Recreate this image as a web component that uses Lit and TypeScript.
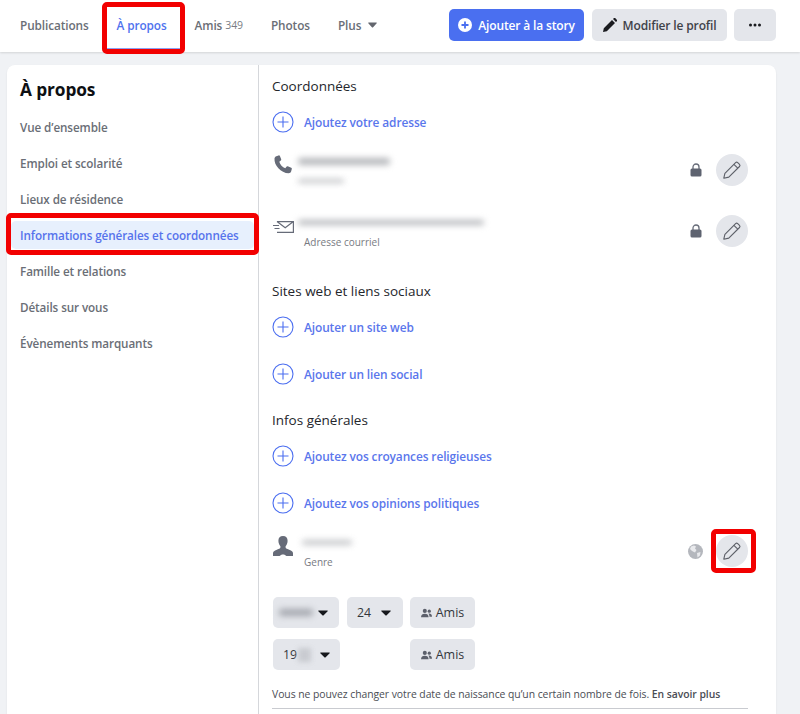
import { LitElement, html, css } from "lit";
import { customElement } from "lit/decorators.js";

const plusCircle = html`<svg class="plus" width="22" height="22" viewBox="0 0 22 22" fill="none" stroke="#4b6ef0" stroke-width="1.1"><circle cx="11" cy="11" r="10"/><path d="M11 5.5v11M5.5 11h11"/></svg>`;
const pencilIcon = html`<svg width="20" height="20" viewBox="0 0 20 20" fill="none" stroke="#5d6068" stroke-width="1.1" stroke-linejoin="round"><path d="M1.8 18.2l1.1-4.9L13.6 2.6a1.5 1.5 0 0 1 2.1 0l1.8 1.8a1.5 1.5 0 0 1 0 2.1L6.8 17.1z"/><path d="M11.9 4.3l3.9 3.9"/></svg>`;
const lockIcon = html`<svg width="12" height="14" viewBox="0 0 12 14"><path d="M3 6V4a3 3 0 0 1 6 0v2" fill="none" stroke="#666b78" stroke-width="1.3"/><rect x="0.5" y="5.5" width="11" height="8" rx="1.5" fill="#5e6370"/></svg>`;
const caret = html`<svg class="caret" width="10" height="6" viewBox="0 0 12 7" preserveAspectRatio="none"><path d="M0.8 0.5h10.4a.6.6 0 0 1 .4 1L6.5 6.3a.7.7 0 0 1-1 0L.4 1.5a.6.6 0 0 1 .4-1z" fill="#16181c"/></svg>`;
const tabCaret = html`<svg class="caret" width="9" height="6" viewBox="0 0 12 7" preserveAspectRatio="none"><path d="M0.8 0.5h10.4a.6.6 0 0 1 .4 1L6.5 6.3a.7.7 0 0 1-1 0L.4 1.5a.6.6 0 0 1 .4-1z" fill="#63666e"/></svg>`;
const friends = html`<svg width="11" height="10" viewBox="0 0 13 11" fill="#5c606b"><circle cx="4.5" cy="3" r="2.4"/><path d="M0 10.5c0-3 1.8-4.2 4.5-4.2S9 7.5 9 10.5z"/><circle cx="9.8" cy="3.4" r="1.9"/><path d="M9.6 6.2c2 0 3.4 1 3.4 3.6h-3c0-1.400-.3-2.600-1.300-3.400z"/></svg>`;

@customElement("app-root")
export class AppRoot extends LitElement {
  static styles = css`
    :host { display: block; width: 800px; height: 714px; overflow: hidden; position: relative; background: #f0f2f5;
      font-family: "Open Sans", "Noto Sans", sans-serif; color: #1c1e21; }
    .top { height: 52px; background: #fff; box-shadow: 0 1px 2px rgba(0,0,0,.12); display: flex; align-items: center; padding: 0 24px 2px 6px; box-sizing: border-box; }
    .tab { padding: 0 14px; font-size: 11.800px; font-weight: 600; color: #6a6e76; display: flex; align-items: center; gap: 3px; white-space: nowrap; height: 50px; box-sizing: border-box; letter-spacing: -.1px; }
    .tab.on { color: #4f72ee; position: relative; }
    .tab.on::after { content: ""; position: absolute; left: 0; right: 0; bottom: 0; height: 2px; background: #8d9ff2; }
    .tab small { font-size: 10.500px; font-weight: 400; color: #7a7d84; }
    .tab .caret { margin-left: 4px; }
    .spacer { flex: 1; }
    .btn { height: 32px; border-radius: 5px; display: flex; align-items: center; justify-content: center; gap: 6px; font-size: 12px; font-weight: 600; background: #e4e6eb; color: #3f4249; box-sizing: border-box; letter-spacing: -.15px; white-space: nowrap; }
    .btn.blue { width: 135px; background: #4a6ff0; color: #fff; margin-right: 8px; }
    .btn.edit { width: 135px; margin-right: 7px; }
    .btn.more { width: 42px; }
    .page { padding: 13px 24px 0 7px; }
    .card { background: #fff; border-radius: 8px; display: flex; height: 680px; box-shadow: 0 1px 2px rgba(0,0,0,.08); }
    .side { width: 251px; flex: none; border-right: 1px solid #d5d7db; }
    .side h1 { margin: 0; font-size: 17.300px; font-weight: 700; color: #0e1013; height: 44px; padding: 14px 0 0 13px; box-sizing: border-box; line-height: 22px; letter-spacing: -.1px; }
    .item { height: 36px; display: flex; align-items: center; padding-left: 13px; font-size: 11.700px; font-weight: 600; color: #6a6e76; white-space: nowrap; letter-spacing: -.1px; }
    .item.on { color: #5673ec; position: relative; }
    .item.on::before { content: ""; position: absolute; z-index: 0; left: 4px; right: 4px; top: 4px; bottom: 4px; background: #e7f0fd; border-radius: 5px; }
    .item.on span { position: relative; }
    .main { flex: 1; padding: 11px 28px 0 13px; }
    h2 { margin: 0; height: 20px; line-height: 20px; font-size: 13.500px; font-weight: 500; color: #24262b; }
    h2.s2 { margin-top: 25px; }
    h2.s3 { margin-top: 13px; }
    .add { height: 47px; display: flex; align-items: center; gap: 10px; font-size: 11.900px; font-weight: 600; color: #5a76ec; letter-spacing: -.1px; }
    .add.first { margin-top: 2px; }
    .add.s2 { margin-top: 2px; }
    .add.s3 { margin-top: 2px; }
    .row { height: 50px; display: flex; align-items: center; }
    .row.mail { margin-top: 11px; }
    .ic { width: 32px; flex: none; align-self: flex-start; padding: 10px 0 0 1px; box-sizing: border-box; }
    .mail .ic { padding-top: 15px; }
    .gender .ic { padding-top: 10px; }
    .ic svg { display: block; }
    .info { flex: 1; display: flex; flex-direction: column; align-self: flex-start; }
    .blur { background: #b4b6ba; filter: blur(3px); border-radius: 3px; }
    .b1 { width: 92px; height: 7px; margin: 13px 0 0 -6px; }
    .b2 { width: 46px; height: 4px; margin: 14px 0 0 -6px; opacity: .85; }
    .b3 { width: 186px; height: 5px; margin: 14px 0 0 -6px; }
    .b4 { width: 50px; height: 5px; margin: 14px 0 0 -2px; opacity: .8; }
    .sub { font-size: 10px; color: #777a82; line-height: 14px; }
    .mail .sub { margin-top: 10px; }
    .gender .sub { margin-top: 10px; }
    .lock { width: 21px; display: flex; justify-content: center; margin-right: 10px; }
    .pen { width: 32px; height: 32px; border-radius: 50%; background: #e4e6eb; display: flex; align-items: center; justify-content: center; }
    .formrow { display: grid; grid-template-columns: 74px 63px 65px; height: 31px; align-items: stretch; padding-left: 1px; }
    .formrow.f1 { margin-top: 21px; }
    .formrow.f2 { margin-top: 11px; }
    .sel { background: #e4e6eb; border-radius: 5px; display: flex; align-items: center; font-size: 12.300px; font-weight: 500; color: #33363c; box-sizing: border-box; padding-left: 10px; }
    .sel.month { width: 66px; padding-left: 6px; gap: 5px; }
    .sel.day { width: 56px; gap: 10px; }
    .sel.year { width: 67px; grid-column: 1 / 3; }
    .sel.year .caret { margin-left: 9px; }
    .sel.amis { width: 65px; grid-column: 3; justify-content: center; gap: 4px; padding: 0; font-size: 12.500px; font-weight: 400; }
    .bm { width: 34px; height: 7px; background: #a3a6ad; filter: blur(3px); border-radius: 3px; }
    .by { width: 13px; height: 14px; background: #c9cbd1; filter: blur(2.500px); margin-left: 1px; }
    .note { margin-top: 14px; height: 20px; line-height: 20px; font-size: 10.400px; color: #4a4d54; white-space: nowrap; letter-spacing: -.05px; }
    .note b { font-weight: 600; }
    .rule { margin-top: 4px; border-top: 1px solid #c9cbd0; width: 476px; }
    .mark { position: absolute; border: 5px solid #f20000; border-radius: 5px; box-sizing: border-box; pointer-events: none; z-index: 3; }
    .m1 { left: 102px; top: 2px; width: 83px; height: 52px; }
    .m2 { left: 6px; top: 213px; width: 253px; height: 42px; }
    .m3 { left: 711px; top: 529px; width: 45px; height: 44px; }
  `;

  render() {
    return html`
      <div class="top">
        <div class="tab">Publications</div>
        <div class="tab on">À propos</div>
        <div class="tab">Amis <small>349</small></div>
        <div class="tab">Photos</div>
        <div class="tab">Plus ${tabCaret}</div>
        <div class="spacer"></div>
        <div class="btn blue">
          <svg width="14" height="14" viewBox="0 0 14 14"><circle cx="7" cy="7" r="7" fill="#fff"/><path d="M7 3.500v7M3.500 7h7" stroke="#4a6ff0" stroke-width="1.800"/></svg>
          Ajouter à la story
        </div>
        <div class="btn edit">
          <svg width="14" height="14" viewBox="0 0 14 14" fill="#1a1b1f"><path d="M0 14l.8-3.800L9 2l3 3-8.200 8.200zM10 1l1-1c.4-.3.8-.3 1.100 0l1.900 1.900c.3.300.3.700 0 1L13 4z"/></svg>
          Modifier le profil
        </div>
        <div class="btn more">
          <svg width="12" height="4" viewBox="0 0 12 4" fill="#1a1b1f"><circle cx="1.500" cy="2" r="1.500"/><circle cx="6" cy="2" r="1.500"/><circle cx="10.500" cy="2" r="1.500"/></svg>
        </div>
      </div>
      <div class="page">
        <div class="card">
          <div class="side">
            <h1>À propos</h1>
            <div class="item"><span>Vue d’ensemble</span></div>
            <div class="item"><span>Emploi et scolarité</span></div>
            <div class="item"><span>Lieux de résidence</span></div>
            <div class="item on"><span>Informations générales et coordonnées</span></div>
            <div class="item"><span>Famille et relations</span></div>
            <div class="item"><span>Détails sur vous</span></div>
            <div class="item"><span>Évènements marquants</span></div>
          </div>
          <div class="main">
            <h2>Coordonnées</h2>
            <div class="add first">${plusCircle}<span>Ajoutez votre adresse</span></div>
            <div class="row phone">
              <div class="ic"><svg width="20" height="20" viewBox="0 0 20 20"><path d="M3.300 1.200 5.600.4c.6-.2 1.100.1 1.300.6l1.300 3.300c.2.500 0 1-.4 1.300L6.300 6.700c.7 2.800 3.200 5.600 6 6.600l1.100-1.600c.3-.4.9-.6 1.400-.4l3.400 1.500c.5.200.8.800.6 1.300l-.7 2.500c-.3.900-1.300 1.700-2.400 1.700C7.800 18.100 .9 10.300 1.500 3.500c.1-1 .9-2 1.800-2.300z" fill="#666b78"/></svg></div>
              <div class="info"><div class="blur b1"></div><div class="blur b2"></div></div>
              <div class="lock">${lockIcon}</div>
              <div class="pen">${pencilIcon}</div>
            </div>
            <div class="row mail">
              <div class="ic"><svg width="21" height="12" viewBox="0 0 21 12" fill="none" stroke="#666b78" stroke-width="1.200"><path d="M4 .6h16.400v10.800H4M4 .6l8.200 6.200L20.400 .6"/><path d="M0 4.500h6M1.500 7.500h5"/></svg></div>
              <div class="info"><div class="blur b3"></div><div class="sub">Adresse courriel</div></div>
              <div class="lock">${lockIcon}</div>
              <div class="pen">${pencilIcon}</div>
            </div>
            <h2 class="s2">Sites web et liens sociaux</h2>
            <div class="add s2">${plusCircle}<span>Ajouter un site web</span></div>
            <div class="add">${plusCircle}<span>Ajouter un lien social</span></div>
            <h2 class="s3">Infos générales</h2>
            <div class="add s3">${plusCircle}<span>Ajoutez vos croyances religieuses</span></div>
            <div class="add">${plusCircle}<span>Ajoutez vos opinions politiques</span></div>
            <div class="row gender">
              <div class="ic"><svg width="20" height="20" viewBox="0 0 20 20" fill="#666b78"><path d="M10 0c3 0 4.600 2 4.600 4.800 0 2.300-1 4.500-2 5.500v1.200c0 .9 1.900 1.500 4.100 2.500 1.600.7 3.300 1.500 3.300 3.200V20h-6.600c-.8-.9-2-1.500-3.400-1.500S7.400 19.100 6.600 20H0v-2.800c0-1.700 1.700-2.500 3.300-3.200 2.200-1 4.100-1.600 4.100-2.500v-1.200c-1-1-2-3.200-2-5.500C5.400 2 7 0 10 0z"/></svg></div>
              <div class="info"><div class="blur b4"></div><div class="sub">Genre</div></div>
              <div class="lock"><svg width="15" height="15" viewBox="0 0 15 15"><circle cx="7.500" cy="7.500" r="7.500" fill="#b4b7bd"/><path d="M3 2.500l3-1 2 1-1 2 1.500 1.500L7 8.500 4 7 2 5zM9 9l3.500-1-.5 3.500-2.500 2z" fill="#e9eaed"/></svg></div>
              <div class="pen">${pencilIcon}</div>
            </div>
            <div class="formrow f1">
              <div class="sel month"><div class="bm"></div>${caret}</div>
              <div class="sel day"><span>24</span>${caret}</div>
              <div class="sel amis">${friends}<span>Amis</span></div>
            </div>
            <div class="formrow f2">
              <div class="sel year"><span>19</span><div class="by"></div>${caret}</div>
              <div class="sel amis">${friends}<span>Amis</span></div>
            </div>
            <div class="note">Vous ne pouvez changer votre date de naissance qu’un certain nombre de fois. <b>En savoir plus</b></div>
            <div class="rule"></div>
          </div>
        </div>
      </div>
      <div class="mark m1"></div>
      <div class="mark m2"></div>
      <div class="mark m3"></div>
    `;
  }
}
